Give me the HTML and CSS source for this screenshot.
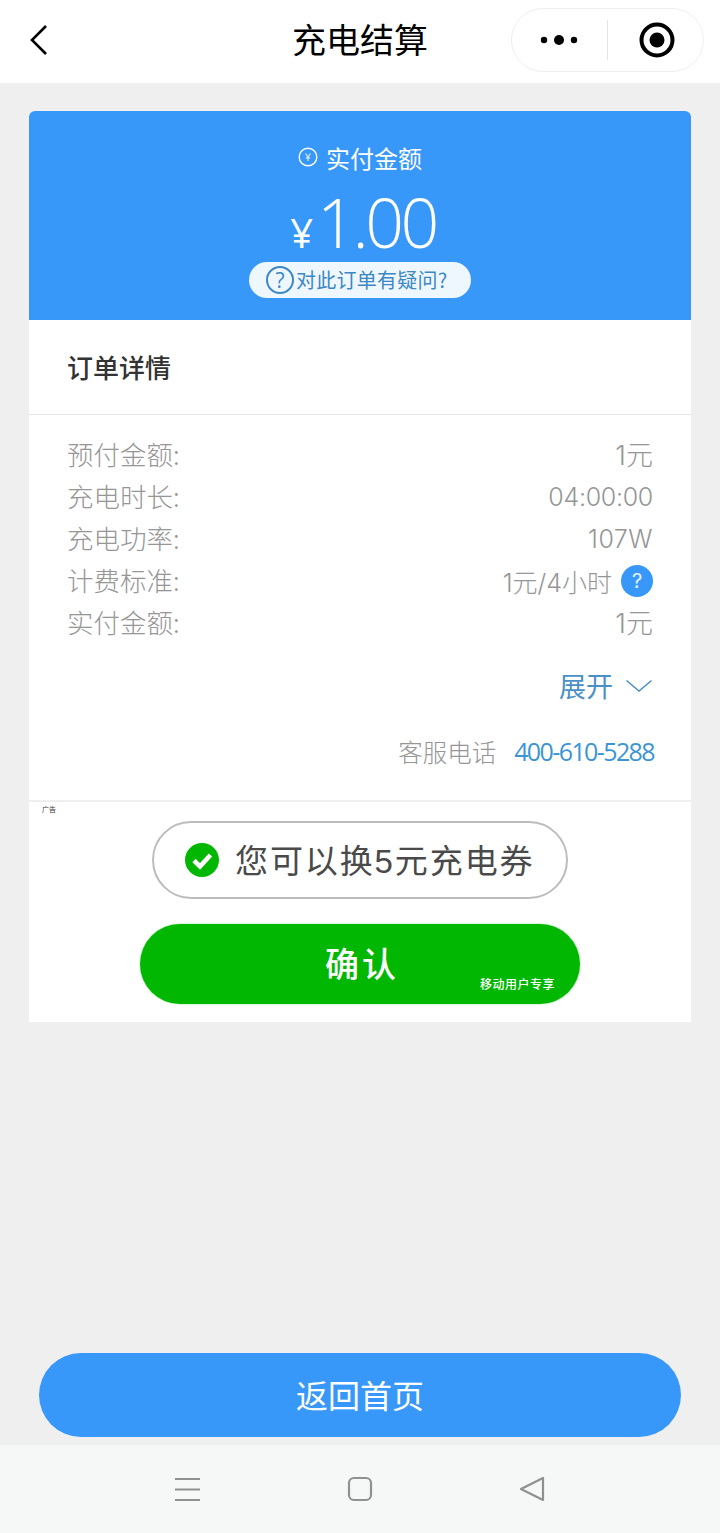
FILE: index.html
```html
<!DOCTYPE html>
<html lang="zh-CN">
<head>
    <meta charset="UTF-8">
    <meta name="viewport" content="width=device-width, initial-scale=1.0">
    <title>充电结算</title>
    <link rel="stylesheet" href="styles.css">
</head>
<body>
    <header class="topbar">
        <svg class="back-icon" width="20" height="32" viewBox="0 0 20 32">
            <path d="M17 2 L3 16 L17 30" fill="none" stroke="#000" stroke-width="2.6"/>
        </svg>
        <h1 class="page-title">充电结算</h1>
        <div class="capsule">
            <svg class="more-icon" width="40" height="12" viewBox="0 0 40 12">
                <circle cx="4" cy="6" r="3.2" fill="#000"/>
                <circle cx="19" cy="6" r="5" fill="#000"/>
                <circle cx="34" cy="6" r="3.2" fill="#000"/>
            </svg>
            <span class="capsule-line"></span>
            <svg class="target-icon" width="36" height="36" viewBox="0 0 36 36">
                <circle cx="18" cy="18" r="15.5" fill="none" stroke="#000" stroke-width="4"/>
                <circle cx="18" cy="18" r="7.5" fill="#000"/>
            </svg>
        </div>
    </header>

    <main class="content">
        <section class="card">
            <div class="pay-head">
                <div class="pay-label">
                    <svg width="20" height="20" viewBox="0 0 20 20">
                        <circle cx="10" cy="10" r="8.8" fill="none" stroke="#fff" stroke-width="1.4"/>
                        <path d="M7.5 6.5 L10 10 L12.5 6.5 M10 10 V14 M7.8 10.8 H12.2" fill="none" stroke="#dcecff" stroke-width="1.2"/>
                    </svg>
                    <span>实付金额</span>
                </div>
                <div class="pay-amount"><span class="yen">¥</span><span class="num">1.00</span></div>
                <div class="question-pill">
                    <i class="question-ring">?</i>
                    <span>对此订单有疑问?</span>
                </div>
            </div>

            <h2 class="detail-title">订单详情</h2>

            <div class="detail-body">
                <div class="row"><span class="row-label">预付金额:</span><span class="row-unit">1元</span></div>
                <div class="row"><span class="row-label">充电时长:</span><span class="row-time">04:00:00</span></div>
                <div class="row"><span class="row-label">充电功率:</span><span class="row-power">107W</span></div>
                <div class="row">
                    <span class="row-label">计费标准:</span>
                    <span class="row-help">1元/4小时<i class="help-dot">?</i></span>
                </div>
                <div class="row"><span class="row-label">实付金额:</span><span class="row-unit">1元</span></div>

                <div class="expand">
                    <span>展开</span>
                    <svg width="28" height="14" viewBox="0 0 28 14">
                        <path d="M1.5 1.5 L14 12 L26.5 1.5" fill="none" stroke="#4a90c4" stroke-width="1.5"/>
                    </svg>
                </div>
                <div class="service">
                    <span class="service-label">客服电话</span>
                    <span class="service-phone">400-610-5288</span>
                </div>
            </div>
        </section>

        <section class="ad">
            <span class="ad-tag">广告</span>
            <div class="coupon">
                <svg width="34" height="34" viewBox="0 0 34 34">
                    <circle cx="17" cy="17" r="17" fill="#02b702"/>
                    <path d="M9 17.5 L15 23.5 L25.5 12" fill="none" stroke="#fff" stroke-width="4.6"/>
                </svg>
                <span>您可以换5元充电券</span>
            </div>
            <div class="confirm">
                <span class="confirm-text">确认</span>
                <span class="confirm-note">移动用户专享</span>
            </div>
        </section>

        <button class="home-btn" type="button">返回首页</button>
    </main>

    <nav class="navbar">
        <svg width="26" height="25" viewBox="0 0 26 25">
            <path d="M0 2 H25 M0 12.5 H25 M0 23 H25" fill="none" stroke="#8f9090" stroke-width="2"/>
        </svg>
        <svg width="26" height="26" viewBox="0 0 26 26">
            <rect x="2" y="2" width="22" height="22" rx="5" fill="none" stroke="#8f9090" stroke-width="2.2"/>
        </svg>
        <svg width="26" height="26" viewBox="0 0 26 26">
            <path d="M24 2 V24 L2 13 Z" fill="none" stroke="#8f9090" stroke-width="2.2" stroke-linejoin="round"/>
        </svg>
    </nav>
</body>
</html>
```

FILE: styles.css
```css
* {
    box-sizing: border-box;
}

html, body {
    margin: 0;
    padding: 0;
}

body {
    width: 720px;
    height: 1533px;
    display: flex;
    flex-direction: column;
    overflow: hidden;
    background-color: #efefef;
    font-family: "Inter", "Noto Sans CJK SC", sans-serif;
    color: #999;
}

.topbar {
    height: 83px;
    flex: none;
    display: flex;
    align-items: center;
    justify-content: center;
    position: relative;
    padding-bottom: 6px;
    background-color: #fff;
}

.back-icon {
    position: absolute;
    left: 29px;
    top: 24px;
}

.page-title {
    margin: 0;
    font-family: "Noto Sans CJK SC", sans-serif;
    font-size: 34px;
    font-weight: 400;
    color: #000;
}

.capsule {
    position: absolute;
    left: 511px;
    top: 8px;
    width: 193px;
    height: 64px;
    display: flex;
    align-items: center;
    padding-left: 28px;
    border: 1px solid #efefef;
    border-radius: 32px;
    background-color: #fff;
}

.capsule-line {
    width: 1px;
    height: 40px;
    margin-left: 27px;
    background-color: #e4e4e4;
}

.target-icon {
    margin-left: 31px;
}

.content {
    flex: 1;
    display: flex;
    flex-direction: column;
    padding: 28px 29px 8px;
}

.card {
    background-color: #fff;
    border-radius: 6px 6px 0 0;
    overflow: hidden;
}

.pay-head {
    height: 209px;
    display: flex;
    flex-direction: column;
    align-items: center;
    padding-top: 32px;
    background-color: #3898fa;
    color: #fff;
}

.pay-label {
    height: 30px;
    display: flex;
    align-items: center;
    gap: 8px;
    font-family: "Noto Sans CJK SC", sans-serif;
    font-size: 24px;
    line-height: 30px;
}

.pay-label svg {
    margin-top: -2px;
}

.pay-amount {
    height: 72px;
    margin-top: 13px;
    display: flex;
    align-items: baseline;
    padding-left: 6px;
    font-family: "Open Sans", sans-serif;
    font-weight: 300;
    line-height: 72px;
}

.yen {
    font-size: 40px;
    font-weight: 500;
    margin-right: 4px;
}

.num {
    font-size: 68px;
    font-weight: 350;
    letter-spacing: -3.5px;
}

.question-pill {
    width: 222px;
    height: 36px;
    margin-top: 4px;
    display: flex;
    align-items: center;
    padding-left: 17px;
    border-radius: 18px;
    background-color: #eef7fe;
    color: #3d87c4;
    font-family: "Noto Sans CJK SC", sans-serif;
    font-size: 20px;
    letter-spacing: 0.25px;
    white-space: nowrap;
}

.question-pill span {
    position: relative;
    top: -1px;
}

.question-ring {
    width: 28px;
    height: 28px;
    flex: none;
    display: block;
    margin-right: 2px;
    border: 2px solid #3d87c4;
    border-radius: 50%;
    font-family: "Open Sans", sans-serif;
    font-size: 21px;
    font-style: normal;
    line-height: 24px;
    letter-spacing: 0;
    text-align: center;
}

.detail-title {
    height: 95px;
    margin: 0;
    padding: 0 38px;
    border-bottom: 1px solid #e6e6e6;
    font-family: "Noto Sans CJK SC", sans-serif;
    font-size: 26px;
    font-weight: 500;
    line-height: 94px;
    color: #333;
}

.detail-body {
    height: 385px;
    padding: 19px 38px 0 38px;
}

.row {
    height: 42px;
    display: flex;
    align-items: center;
    justify-content: space-between;
    padding-bottom: 1px;
    font-size: 25px;
    font-weight: 300;
    color: #969696;
}

.row-label {
    position: relative;
    top: -1px;
    font-family: "Noto Sans CJK SC", sans-serif;
    font-size: 26.5px;
}

.row-unit {
    position: relative;
    top: -1px;
    font-size: 27px;
}

.row-time {
    letter-spacing: -0.3px;
}

.row-power {
    letter-spacing: 0.5px;
}

.row-help {
    display: flex;
    align-items: center;
    gap: 9px;
}

.help-dot {
    width: 32px;
    height: 32px;
    display: block;
    border-radius: 50%;
    background-color: #3898fa;
    color: #e8f4ff;
    font-size: 20px;
    font-style: normal;
    font-weight: 400;
    line-height: 32px;
    text-align: center;
}

.expand {
    height: 42px;
    margin-top: 20px;
    display: flex;
    align-items: center;
    justify-content: flex-end;
    gap: 12px;
    font-family: "Noto Sans CJK SC", sans-serif;
    font-size: 27px;
    color: #4a90c4;
}

.expand svg {
    margin-top: 2px;
}

.service {
    height: 42px;
    margin-top: 24px;
    display: flex;
    align-items: center;
    justify-content: flex-end;
    gap: 18px;
    margin-right: -1px;
}

.service-label {
    font-family: "Noto Sans CJK SC", sans-serif;
    font-size: 24.5px;
    font-weight: 300;
    color: #969696;
}

.service-phone {
    font-family: "Open Sans", sans-serif;
    font-size: 25px;
    font-weight: 400;
    letter-spacing: -1.6px;
    color: #3c95d2;
}

.ad {
    height: 220px;
    margin-top: 2px;
    display: flex;
    flex-direction: column;
    align-items: center;
    position: relative;
    padding-top: 19px;
    background-color: #fff;
}

.ad-tag {
    position: absolute;
    left: 13px;
    top: 2px;
    font-family: "Noto Sans CJK SC", sans-serif;
    font-size: 7px;
    line-height: 10px;
    color: #333;
}

.coupon {
    width: 416px;
    height: 78px;
    display: flex;
    align-items: center;
    gap: 16px;
    padding-left: 31px;
    border: 2px solid #bdbdbd;
    border-radius: 39px;
    font-family: "Liberation Sans", "Noto Sans CJK SC", sans-serif;
    font-size: 33px;
    letter-spacing: 1.9px;
    color: #4a4a4a;
    white-space: nowrap;
}

.coupon span {
    position: relative;
    top: -1px;
}

.confirm {
    width: 440px;
    height: 80px;
    margin-top: 25px;
    position: relative;
    display: flex;
    align-items: center;
    justify-content: center;
    padding: 0 0 3px 4px;
    border-radius: 40px;
    background-color: #02b702;
    box-shadow: 0 0 2px #7fe07f;
    color: #fff;
}

.confirm-text {
    font-family: "Noto Sans CJK SC", sans-serif;
    font-size: 34px;
    font-weight: 500;
    letter-spacing: 3px;
}

.confirm-note {
    position: absolute;
    right: 25px;
    bottom: 12px;
    font-family: "Noto Sans CJK SC", sans-serif;
    font-size: 12px;
    font-weight: 500;
    line-height: 16px;
    letter-spacing: 0.5px;
}

.home-btn {
    width: 642px;
    height: 84px;
    flex: none;
    margin: auto 0 0 10px;
    padding: 0 0 2px;
    border: none;
    border-radius: 42px;
    background-color: #3898fa;
    color: #fff;
    font-family: "Noto Sans CJK SC", sans-serif;
    font-size: 32px;
    cursor: pointer;
}

.navbar {
    height: 88px;
    flex: none;
    display: flex;
    align-items: center;
    justify-content: space-between;
    padding: 0 175px 0 175px;
    background-color: #f6f7f7;
}
```
